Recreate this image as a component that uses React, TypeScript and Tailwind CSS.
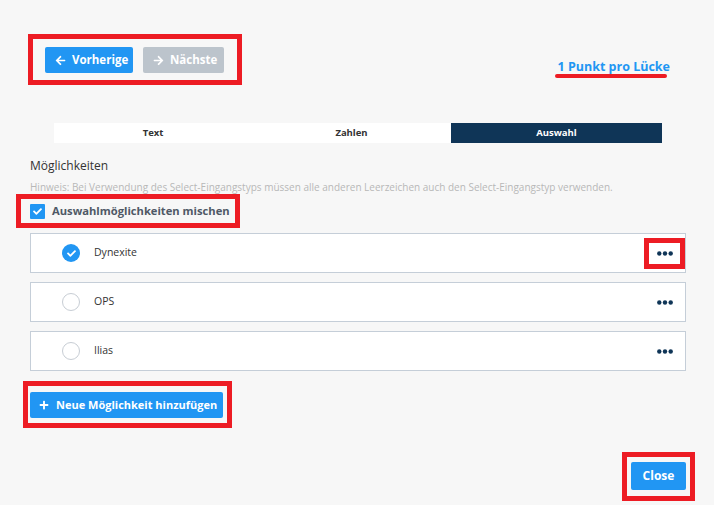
import { FaArrowLeft, FaArrowRight, FaCheck, FaPlus } from "react-icons/fa";

const options = [
  { label: "Dynexite", checked: true, marked: true },
  { label: "OPS", checked: false, marked: false },
  { label: "Ilias", checked: false, marked: false },
];

function Dots() {
  return (
    <svg width="16" height="5" viewBox="0 0 16 5">
      <circle cx="2.3" cy="2.5" r="2.2" fill="#0f3557" />
      <circle cx="8" cy="2.5" r="2.2" fill="#0f3557" />
      <circle cx="13.7" cy="2.5" r="2.2" fill="#0f3557" />
    </svg>
  );
}

export default function App() {
  return (
    <div className="relative h-[505px] w-[714px] overflow-hidden bg-[#f7f7f7] font-['Open_Sans',sans-serif]">
      <div className="flex items-start justify-between pl-[28px] pr-[44px] pt-[34px]">
        <div className="flex h-[51px] w-[214px] items-start gap-[10px] border-[5px] border-[#ed1c24] pl-[12px] pt-[8px]">
          <button className="flex h-[26px] w-[88px] items-center gap-[6px] whitespace-nowrap rounded-[2px] bg-[#2196f3] pl-[10px] text-[11.5px] font-bold text-white">
            <FaArrowLeft className="h-[11px] w-[11px]" />
            Vorherige
          </button>
          <button className="flex h-[26px] w-[81px] items-center gap-[6px] whitespace-nowrap rounded-[2px] bg-[#bcc4cc] pl-[10px] text-[11.5px] font-bold text-white">
            <FaArrowRight className="h-[11px] w-[11px]" />
            Nächste
          </button>
        </div>
        <div className="mt-[25px] flex flex-col">
          <span className="whitespace-nowrap text-[12.5px] font-bold leading-[16px] text-[#2196f3]">1 Punkt pro Lücke</span>
          <div className="-ml-[2px] mt-[-1px] h-[4px] w-[112px] rounded-full bg-[#ed1c24]" />
        </div>
      </div>

      <div className="pl-[30px] pr-[28px]">
        <div className="mx-[24px] mt-[38px] flex h-[20px] text-[9.5px] font-bold">
          <div className="flex w-[198px] items-center justify-center bg-white text-[#333]">Text</div>
          <div className="flex w-[199px] items-center justify-center bg-white text-[#333]">Zahlen</div>
          <div className="flex flex-1 items-center justify-center bg-[#0f3557] text-white">Auswahl</div>
        </div>

        <div className="mt-[15px] text-[12px] leading-[16px] text-[#333]">Möglichkeiten</div>
        <div className="mt-[6px] whitespace-nowrap text-[10px] leading-[14px] text-[#b8b8b8]">
          Hinweis: Bei Verwendung des Select-Eingangstyps müssen alle anderen Leerzeichen auch den Select-Eingangstyp verwenden.
        </div>

        <div className="-ml-[14px] flex h-[34px] w-[224px] items-center gap-[7px] border-[5px] border-[#ed1c24] pl-[9px]">
          <span className="flex h-[15px] w-[15px] shrink-0 items-center justify-center rounded-[1px] bg-[#2196f3]">
            <FaCheck className="h-[9px] w-[9px] text-white" />
          </span>
          <span className="whitespace-nowrap text-[11.2px] font-bold text-[#4f5966]">Auswahlmöglichkeiten mischen</span>
        </div>

        <div className="mt-[5px] flex flex-col gap-[9px]">
          {options.map((o) => (
            <div
              key={o.label}
              className="flex h-[40px] items-center border border-[#c5ced8] bg-white pl-[31px]"
            >
              {o.checked ? (
                <span className="flex h-[18px] w-[18px] items-center justify-center rounded-full bg-[#2196f3]">
                  <FaCheck className="h-[9px] w-[9px] text-white" />
                </span>
              ) : (
                <span className="h-[18px] w-[18px] rounded-full border-[1.5px] border-[#c7cdd4] bg-white" />
              )}
              <span className="ml-[14px] flex-1 text-[10.5px] text-[#333]">{o.label}</span>
              <div
                className={
                  o.marked
                    ? "flex h-[31px] w-[41px] items-center justify-center border-[5px] border-[#ed1c24]"
                    : "flex h-[31px] w-[41px] items-center justify-center border-[5px] border-transparent"
                }
              >
                <Dots />
              </div>
            </div>
          ))}
        </div>

        <div className="-ml-[7px] mt-[10px] h-[47px] w-[209px] border-[5px] border-[#ed1c24] pl-[2px] pt-[6px]">
          <button className="flex h-[26px] w-[193px] items-center gap-[7px] whitespace-nowrap rounded-[2px] bg-[#2196f3] pl-[9px] text-[11px] font-bold text-white">
            <FaPlus className="h-[10px] w-[10px]" />
            Neue Möglichkeit hinzufügen
          </button>
        </div>
      </div>

      <div className="mt-[24px] flex justify-end pr-[19px]">
        <div className="flex h-[49px] w-[73px] items-start justify-center border-[5px] border-[#ed1c24] pt-[5px]">
          <button className="h-[28px] w-[55px] rounded-[2px] bg-[#2196f3] text-[12px] font-bold text-white">
            Close
          </button>
        </div>
      </div>
    </div>
  );
}
